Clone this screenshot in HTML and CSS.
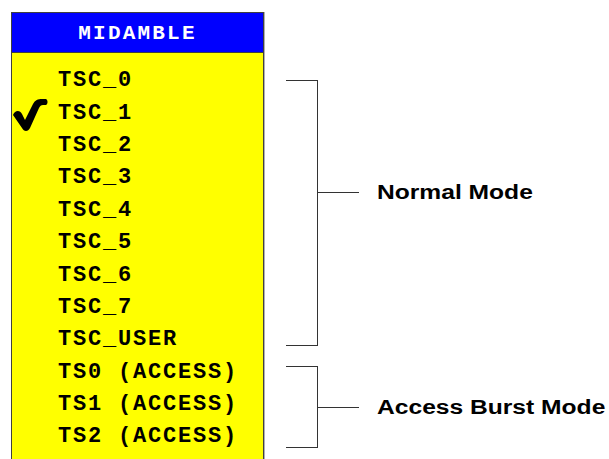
FILE: index.html
```html
<!DOCTYPE html>
<html lang="en">
<head>
    <meta charset="UTF-8">
    <meta name="viewport" content="width=device-width, initial-scale=1.0">
    <title>Midamble</title>
    <link rel="stylesheet" href="styles.css">
</head>
<body>
    <div class="page">
        <div class="menu">
            <div class="menu-title">MIDAMBLE</div>
            <ul class="menu-list">
                <li class="item"><span class="mark"></span><span class="label">TSC_0</span></li>
                <li class="item">
                    <span class="mark">
                        <svg width="36" height="33" viewBox="0 0 36 33">
                            <path d="M1,16 C3,11 8,11 10,15 L13,21 L21,5 C23,1 26,0 30,0 L34,0 C36,1 36,5 34,6 L31,6 C29,6 28,7 27,9 L18,29 C16,33 12,33 10,29 Z" fill="#000"/>
                        </svg>
                    </span>
                    <span class="label">TSC_1</span>
                </li>
                <li class="item"><span class="mark"></span><span class="label">TSC_2</span></li>
                <li class="item"><span class="mark"></span><span class="label">TSC_3</span></li>
                <li class="item"><span class="mark"></span><span class="label">TSC_4</span></li>
                <li class="item"><span class="mark"></span><span class="label">TSC_5</span></li>
                <li class="item"><span class="mark"></span><span class="label">TSC_6</span></li>
                <li class="item"><span class="mark"></span><span class="label">TSC_7</span></li>
                <li class="item"><span class="mark"></span><span class="label">TSC_USER</span></li>
                <li class="item"><span class="mark"></span><span class="label">TS0 (ACCESS)</span></li>
                <li class="item"><span class="mark"></span><span class="label">TS1 (ACCESS)</span></li>
                <li class="item"><span class="mark"></span><span class="label">TS2 (ACCESS)</span></li>
            </ul>
        </div>
        <div class="notes">
            <div class="group group-normal">
                <div class="bracket"></div>
                <div class="callout">
                    <span class="tick"></span>
                    <span class="caption">Normal Mode</span>
                </div>
            </div>
            <div class="group group-access">
                <div class="bracket"></div>
                <div class="callout">
                    <span class="tick"></span>
                    <span class="caption">Access Burst Mode</span>
                </div>
            </div>
        </div>
    </div>
</body>
</html>
```

FILE: styles.css
```css
body {
    margin: 0;
    padding: 0;
    background-color: #ffffff;
    overflow: hidden;
}

.page {
    display: flex;
    align-items: flex-start;
    gap: 22px;
    padding: 12px 0 0 11px;
    height: 459px;
    box-sizing: border-box;
}

.menu {
    width: 253px;
    height: 447px;
    box-sizing: border-box;
    background-color: #ffff00;
    border: 1px solid #404040;
    border-bottom: none;
    box-shadow: 1px 0 0 #b0b0b0;
}

.menu-title {
    height: 40px;
    box-sizing: border-box;
    padding-top: 3px;
    background-color: #0000ff;
    border-bottom: 1px solid #404040;
    color: #ffffff;
    font-family: "Liberation Mono", monospace;
    font-weight: bold;
    font-size: 21px;
    letter-spacing: 2.2px;
    line-height: 36px;
    text-align: center;
}

.menu-list {
    list-style: none;
    margin: 0;
    padding: 11.5px 0 0 0;
}

.item {
    display: flex;
    align-items: center;
    height: 32.4px;
    font-family: "Liberation Mono", monospace;
    font-weight: bold;
    font-size: 22px;
    letter-spacing: 1.8px;
    color: #000000;
}

.mark {
    width: 46px;
    display: flex;
    justify-content: flex-end;
    padding-right: 10px;
    box-sizing: border-box;
}

.mark svg {
    display: block;
    margin-top: 4px;
}

.notes {
    display: flex;
    flex-direction: column;
    gap: 20px;
    margin-top: 68px;
}

.group {
    display: flex;
}

.group-normal .bracket {
    height: 266px;
}

.group-normal .callout {
    margin-top: 101px;
}

.group-access .bracket {
    height: 82px;
}

.group-access .callout {
    align-self: center;
}

.bracket {
    width: 32px;
    box-sizing: border-box;
    border: 1px solid #333333;
    border-left: none;
}

.callout {
    display: flex;
    align-items: center;
    gap: 18px;
    height: 22px;
}

.tick {
    width: 41px;
    height: 1px;
    background-color: #333333;
}

.caption {
    font-family: "Liberation Sans", Arial, sans-serif;
    font-weight: bold;
    font-size: 20px;
    color: #000000;
    white-space: nowrap;
    transform: scaleX(1.23);
    transform-origin: left center;
}
```
